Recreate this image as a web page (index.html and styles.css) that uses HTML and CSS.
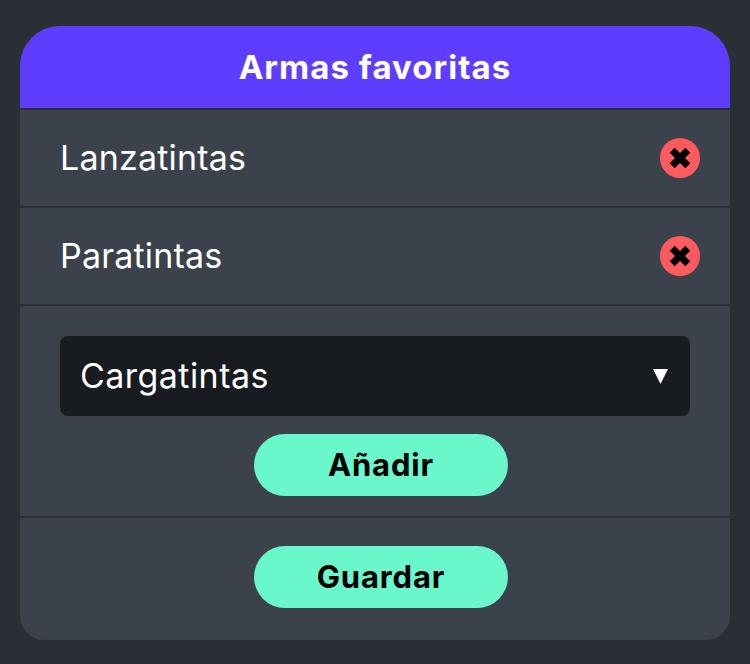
FILE: index.html
```html
<!DOCTYPE html>
<html lang="es">
<head>
    <meta charset="UTF-8">
    <meta name="viewport" content="width=device-width, initial-scale=1.0">
    <title>Armas favoritas</title>
    <link rel="stylesheet" href="styles.css">
</head>
<body>
    <div class="card">
        <div class="card-header">Armas favoritas</div>

        <div class="weapon-row">
            <span class="weapon-name">Lanzatintas</span>
            <button class="remove-btn" aria-label="Quitar">
                <svg viewBox="0 0 24 24" width="24" height="24"><path d="M4.2 4.2 L19.8 19.8 M19.8 4.2 L4.2 19.8" stroke="#000" stroke-width="7"/></svg>
            </button>
        </div>
        <div class="weapon-row">
            <span class="weapon-name">Paratintas</span>
            <button class="remove-btn" aria-label="Quitar">
                <svg viewBox="0 0 24 24" width="24" height="24"><path d="M4.2 4.2 L19.8 19.8 M19.8 4.2 L4.2 19.8" stroke="#000" stroke-width="7"/></svg>
            </button>
        </div>

        <div class="add-section">
            <div class="select-box">
                <span class="weapon-name">Cargatintas</span>
                <svg class="select-arrow" viewBox="0 0 15 15" width="15" height="15"><polygon points="0,0 15,0 7.5,15" fill="#fff"/></svg>
            </div>
            <button class="pill-btn">Añadir</button>
        </div>

        <div class="save-section">
            <button class="pill-btn">Guardar</button>
        </div>
    </div>
</body>
</html>
```

FILE: styles.css
```css
body {
    margin: 0;
    height: 664px;
    padding: 26px 20px 0;
    box-sizing: border-box;
    background-color: #2a2e35;
    font-family: Inter, "Liberation Sans", sans-serif;
    color: #fff;
    overflow: hidden;
}

.card {
    height: 614px;
    background-color: #3c424c;
    border-radius: 40px 40px 24px 24px;
    overflow: hidden;
}

.card-header {
    height: 82px;
    line-height: 82px;
    background-color: #5f3dff;
    text-align: center;
    font-size: 33px;
    font-weight: 700;
    letter-spacing: 1.05px;
    border-bottom: 2px solid #2a2e35;
}

.weapon-row {
    height: 96px;
    padding: 0 30px 0 40px;
    display: flex;
    justify-content: space-between;
    align-items: center;
    font-size: 34px;
    letter-spacing: 0.2px;
    border-bottom: 2px solid #2a2e35;
}

.weapon-name {
    margin-bottom: 2px;
}

.remove-btn {
    width: 40px;
    height: 40px;
    padding: 0;
    border: none;
    border-radius: 50%;
    background-color: #ff5a5f;
    display: flex;
    justify-content: center;
    align-items: center;
}

.add-section {
    height: 180px;
    padding: 30px 40px 0;
    display: flex;
    flex-direction: column;
    align-items: center;
    border-bottom: 2px solid #2a2e35;
}

.select-box {
    width: 100%;
    height: 80px;
    padding: 0 22px 0 20px;
    box-sizing: border-box;
    flex-shrink: 0;
    display: flex;
    justify-content: space-between;
    align-items: center;
    background-color: #181b20;
    border-radius: 8px;
    font-size: 34px;
    letter-spacing: 0.45px;
    margin-bottom: 18px;
}

.pill-btn {
    width: 254px;
    height: 62px;
    margin-left: 12px;
    padding: 0 0 2px;
    flex-shrink: 0;
    border: none;
    border-radius: 31px;
    background-color: #69f7cb;
    color: #000;
    font-family: inherit;
    font-size: 31px;
    font-weight: 700;
    letter-spacing: 0.85px;
}

.save-section {
    padding-top: 28px;
    display: flex;
    justify-content: center;
}
```
